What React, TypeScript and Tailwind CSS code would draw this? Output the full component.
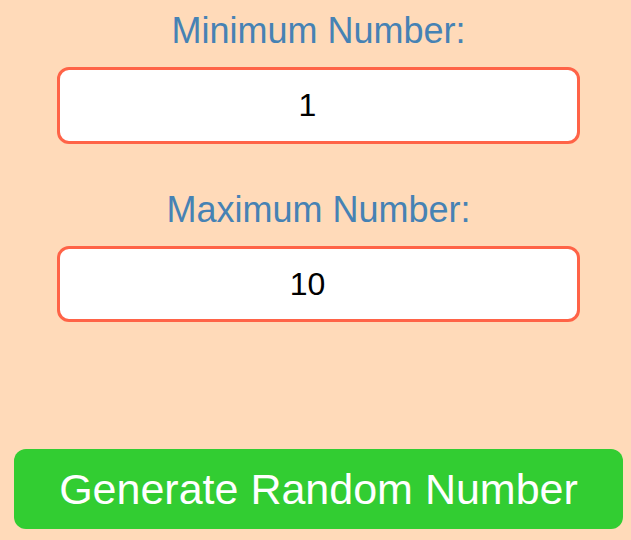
import React, { useState } from 'react';

export default function App() {
  const [min, setMin] = useState('1');
  const [max, setMax] = useState('10');
  const [result, setResult] = useState<number | null>(null);

  const generate = () => {
    const lo = parseInt(min, 10);
    const hi = parseInt(max, 10);
    if (isNaN(lo) || isNaN(hi) || hi < lo) return;
    setResult(Math.floor(Math.random() * (hi - lo + 1)) + lo);
  };

  return (
    <div
      className="min-h-screen bg-[#ffdab9] pl-[14px] pr-[8px] pt-[10px] pb-6"
      style={{ fontFamily: '"Liberation Sans", Arial, sans-serif' }}
    >
      <div className="flex flex-col items-stretch">
        <div className="px-[43px] flex flex-col">
          <label className="text-center text-[36px] leading-[41px] text-[#4682b4]">Minimum Number:</label>
          <input
            type="number"
            value={min}
            onChange={(e) => setMin(e.target.value)}
            className="mt-[16px] h-[77px] w-full rounded-[12px] border-[3px] border-[#ff6347] bg-white pl-[10px] pr-[17px] text-center text-[32px] text-black outline-none"
          />

          <label className="mt-[45px] text-center text-[36px] leading-[41px] text-[#4682b4]">Maximum Number:</label>
          <input
            type="number"
            value={max}
            onChange={(e) => setMax(e.target.value)}
            className="mt-[16px] h-[76px] w-full rounded-[12px] border-[3px] border-[#ff6347] bg-white pl-[10px] pr-[17px] text-center text-[32px] text-black outline-none"
          />
        </div>

        <div className="h-[127px] flex items-center justify-center text-[36px] text-[#4682b4]">
          {result !== null && <span>{result}</span>}
        </div>

        <button
          onClick={generate}
          className="h-[80px] w-full rounded-[12px] bg-[#32cd32] text-[43px] text-white cursor-pointer"
        >
          Generate Random Number
        </button>
      </div>
    </div>
  );
}
